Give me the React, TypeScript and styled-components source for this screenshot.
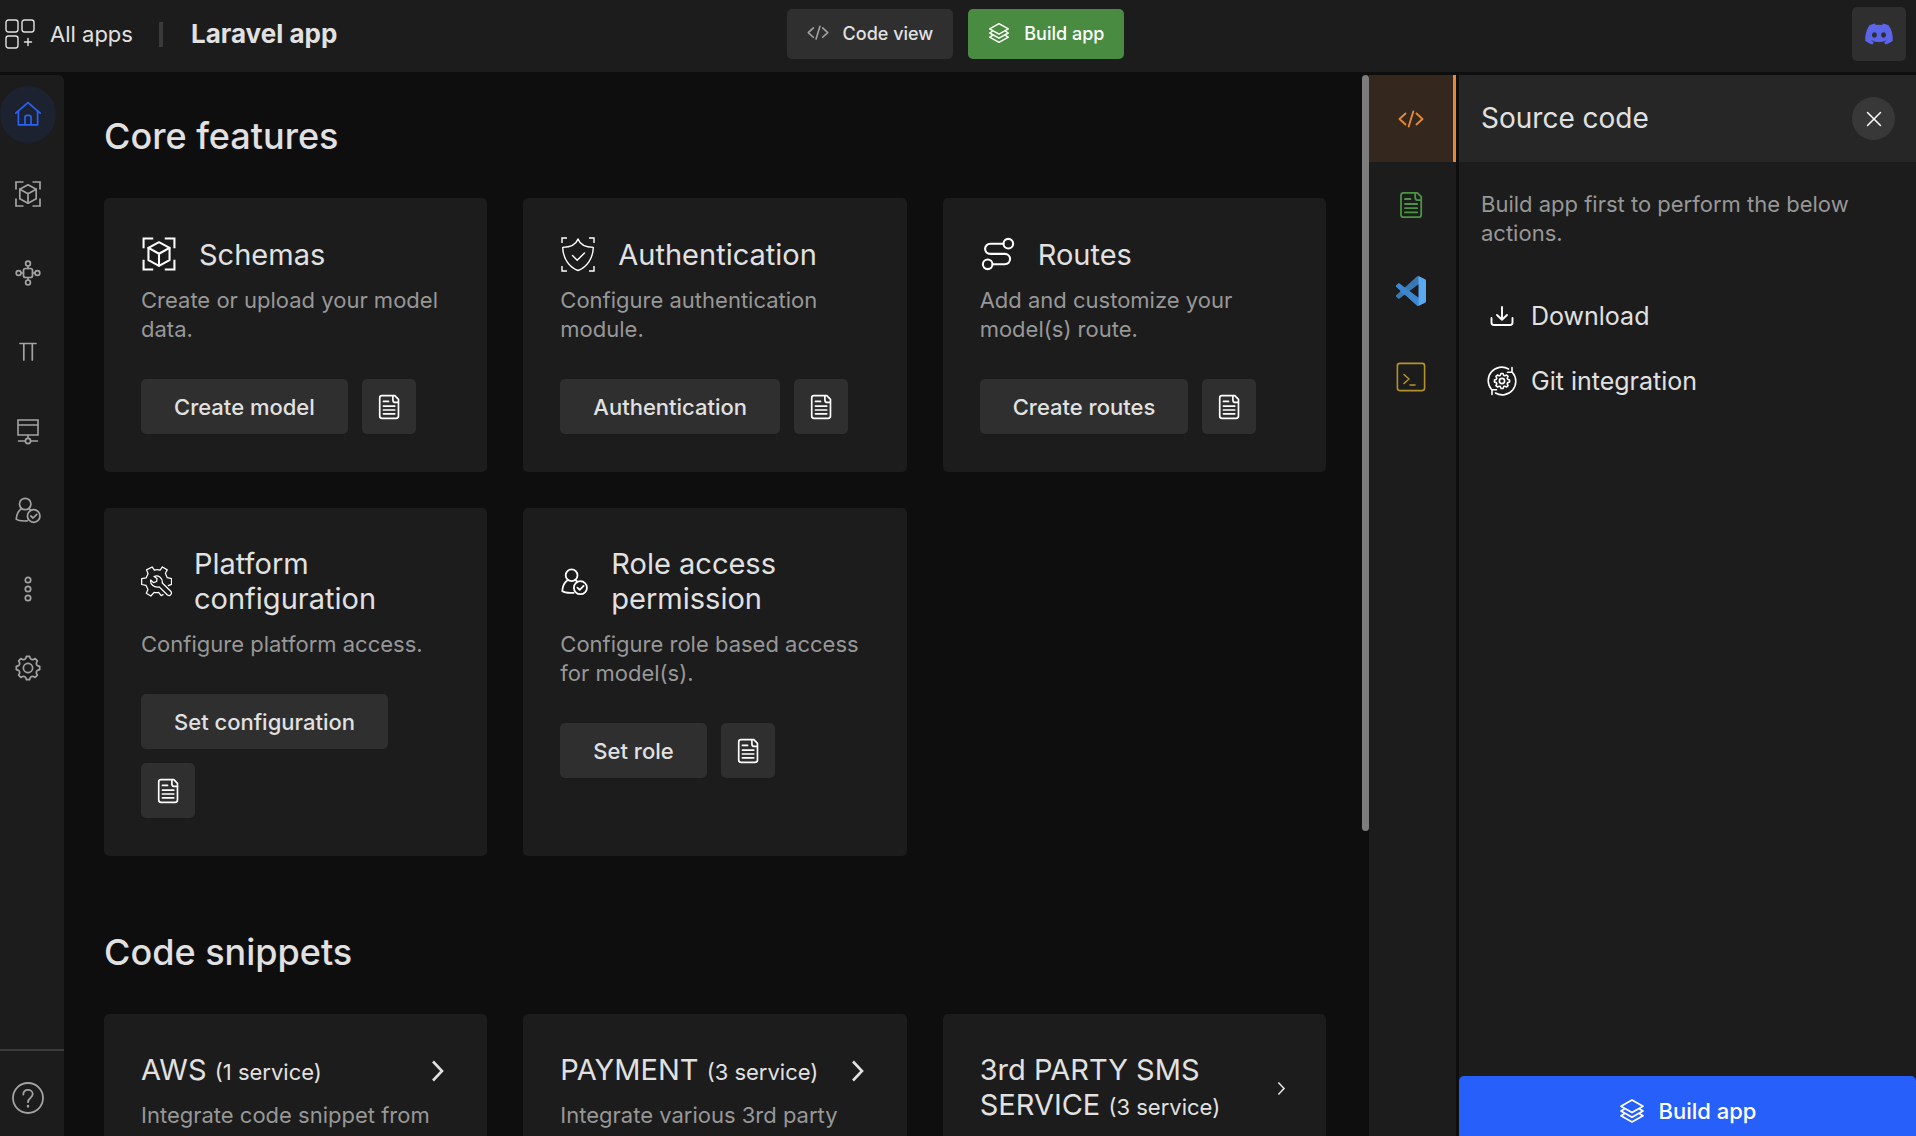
import React from "react";
import styled, { createGlobalStyle } from "styled-components";
import { FaDiscord } from "react-icons/fa";

const color = {
  page: "#0e0e0e",
  surface: "#1c1c1c",
  raised: "#262626",
  control: "#2f2f2f",
  line: "#3a3a3a",
  text: "#e1e1e1",
  muted: "#979797",
  icon: "#a3a3a3",
  white: "#ffffff",
  blue: "#275ffb",
  green: "#498c41",
  orange: "#e78838",
};

const GlobalStyle = createGlobalStyle`
  *, *::before, *::after { box-sizing: border-box; }
  html, body { margin: 0; background: ${color.page}; }
  body {
    overflow: hidden;
    color: ${color.text};
    font-family: Inter, "Liberation Sans", sans-serif;
    -webkit-font-smoothing: antialiased;
  }
  h1, h2, h3, p { margin: 0; font-weight: 400; }
  button { border: 0; padding: 0; margin: 0; font: inherit; color: inherit; background: none; cursor: pointer; }
  a { color: inherit; text-decoration: none; }
  svg { display: block; flex: none; }
`;

/* ---------- icons ---------- */

type IconProps = { size?: number };

const Svg = ({
  w,
  h = w,
  size = w,
  sw = 1.5,
  children,
}: {
  w: number;
  h?: number;
  size?: number;
  sw?: number;
  children: React.ReactNode;
}) => (
  <svg
    width={size}
    height={(size * h) / w}
    viewBox={`0 0 ${w} ${h}`}
    fill="none"
    stroke="currentColor"
    strokeWidth={sw}
    strokeLinecap="round"
    strokeLinejoin="round"
    aria-hidden="true"
  >
    {children}
  </svg>
);

const gearPath = (c: number, teeth: number, outer: number, inner: number) => {
  const step = (Math.PI * 2) / teeth;
  const pt = (r: number, a: number) =>
    `${(c + r * Math.sin(a)).toFixed(2)} ${(c - r * Math.cos(a)).toFixed(2)}`;
  let d = "";
  for (let i = 0; i < teeth; i++) {
    const a = i * step;
    d += `${i ? "L" : "M"}${pt(outer, a - step * 0.17)}`;
    d += `L${pt(outer, a + step * 0.17)}`;
    d += `L${pt(inner + 0.6, a + step * 0.27)}`;
    d += `Q${pt(inner - 1, a + step * 0.5)} ${pt(inner + 0.6, a + step * 0.73)}`;
  }
  return d + "Z";
};

const AppsIcon = () => (
  <Svg w={30} sw={1.4}>
    <rect x="1" y="1" width="12" height="12" rx="2.4" />
    <rect x="17" y="1" width="12" height="12" rx="2.4" />
    <rect x="1" y="17" width="12" height="12" rx="2.4" />
    <path d="M23 19.5v7M19.5 23h7" />
  </Svg>
);

const CodeIcon = ({ size = 22 }: IconProps) => (
  <Svg w={26} h={18} size={size} sw={1.9}>
    <path d="M7.5 3.5 1.5 9l6 5.5M18.5 3.5l6 5.5-6 5.5M15.3 1.5l-4.6 15" />
  </Svg>
);

const LayersIcon = ({ size = 22 }: IconProps) => (
  <Svg w={26} size={size} sw={1.7}>
    <path d="M13 2 24 8.2 13 14.4 2 8.2Z" />
    <path d="M5 11.2 2 13l11 6.2L24 13l-3-1.8" />
    <path d="M5 16 2 17.8 13 24l11-6.2-3-1.8" />
  </Svg>
);

const HomeIcon = () => (
  <Svg w={28} sw={1.7}>
    <path d="M1.8 12.2 14 1.6l12.2 10.6" />
    <path d="M4.4 10.400v13.400h19.200V10.400" />
    <path d="M11 23.600v-7.200q0-2 2-2h2q2 0 2 2v7.200" />
  </Svg>
);

const SchemaIcon = ({ size = 28, sw = 1.7 }: IconProps & { sw?: number }) => (
  <Svg w={28} size={size} sw={sw}>
    <path strokeLinecap="butt" strokeLinejoin="miter" d="M2 9.5V2h7.5M18.5 2H26v7.5M26 18.5V26h-7.5M9.500 26H2v-7.500" />
    <path d="m14 4.800 8.200 4.400v9.600L14 23.200l-8.200-4.400V9.200Z" />
    <path d="m5.800 9.200 8.200 4.600 8.200-4.600M14 13.800v9.400" />
  </Svg>
);

const HubIcon = () => (
  <Svg w={28} sw={1.7}>
    <rect x="9.500" y="9.500" width="9" height="9" rx="2" />
    <circle cx="14" cy="4.600" r="2.400" />
    <circle cx="14" cy="23.400" r="2.400" />
    <circle cx="4.600" cy="14" r="2.400" />
    <circle cx="23.400" cy="14" r="2.400" />
    <path d="M14 7v2.500M14 18.500V21M7 14h2.500M18.500 14H21" />
  </Svg>
);

const PiIcon = () => (
  <Svg w={28} sw={1.7}>
    <path d="M6 5.500h16M9.800 5.500v16.500M18.300 5.500v16.500" />
  </Svg>
);

const ServerIcon = () => (
  <Svg w={28} sw={1.6}>
    <path strokeLinejoin="miter" d="M4 3h20v15H4ZM4 8h20M14 18v3.200M4.500 24h6.900M16.600 24h6.900" />
    <circle cx="14" cy="24" r="2.600" />
  </Svg>
);

const UserCheckIcon = ({ size = 28 }: IconProps) => (
  <Svg w={28} size={size} sw={1.7}>
    <circle cx="11.200" cy="8" r="5.700" />
    <path d="M7.600 12.600C4.300 14.600 2.600 18 2.200 23.200c2 1.600 6.400 2 11 1.700M14.800 12.600l1.800 1.400" />
    <circle cx="19.700" cy="20" r="6.300" />
    <path d="m16.800 20 2.200 2 3.800-3.700" />
  </Svg>
);

const DotsIcon = () => (
  <Svg w={28} sw={1.7}>
    <circle cx="14" cy="5" r="2.700" />
    <circle cx="14" cy="14" r="2.700" />
    <circle cx="14" cy="23" r="2.700" />
  </Svg>
);

const GearIcon = () => (
  <Svg w={28} sw={1.7}>
    <path d={gearPath(14, 8, 11.8, 9.5)} />
    <circle cx="14" cy="14" r="4.600" />
  </Svg>
);

const HelpIcon = () => (
  <Svg w={34} sw={1.8}>
    <circle cx="17" cy="17" r="15" />
    <path d="M12.300 13.600c0-3 2-4.700 4.700-4.700s4.700 1.700 4.700 4.200c0 4-4.700 3.900-4.700 8.100" />
    <path d="M17 25v.4" strokeWidth="2.400" />
  </Svg>
);

const ShieldIcon = () => (
  <Svg w={36} sw={1.4}>
    <path strokeLinecap="butt" strokeLinejoin="miter" d="M2 7V2h5M29 2h5v5M34 30v5h-5M7 35H2v-5" />
    <path d="M18 3c2 5.500 8 8.200 15.300 8.400-.3 10.600-6 19.600-15.300 23.100C8.700 31 3 22 2.700 11.400 10 11.200 16 8.500 18 3Z" />
    <path d="m12.500 19.500 4.700 4.700 7.300-7.200" />
  </Svg>
);

const RouteIcon = () => (
  <Svg w={36} sw={2.1}>
    <circle cx="28.300" cy="7.700" r="4.800" />
    <circle cx="7.700" cy="28.300" r="4.800" />
    <path d="M23.400 7.700H10.200a5.100 5.100 0 0 0 0 10.200h14.700a5.100 5.100 0 0 1 0 10.300H12.700" />
  </Svg>
);

const WrenchGearIcon = () => (
  <svg
    width="31"
    height="31"
    viewBox="-0.5 -0.5 32 32"
    fill="none"
    stroke="currentColor"
    strokeWidth="1.3"
    strokeLinecap="round"
    strokeLinejoin="round"
    aria-hidden="true"
  >
    <path d="M27.700 19.700 31 18.500v-6l-4.500-1-1.800-4.500 1.900-3.500-5-3-2.300 3.200q-3-.9-6 0L11 .5 5.200 3.500l1.600 4-2.100 4.300-4.500.8v6l4.500 1 2 4.200-1.700 3.900 4.700 2.800 3.300-3.700q2.400.6 4.700 0l2.600 3.300 2-1" />
    <path d="M13 10.300c4-2.200 9 1.500 8.500 6.700l8.700 8.500c2 2.500-.7 5.700-3.400 4L18.300 21c-5 1.300-9.800-2.600-8.800-7l2.800 2.700 3.400-1.200.3-3Z" />
  </svg>
);

const DocIcon = ({ size = 26 }: IconProps) => (
  <Svg w={28} size={size} sw={1.8}>
    <path d="M6.500 1.800h13.800l3.900 3.900v18c0 1.700-.8 2.500-2.500 2.500H6.500C4.800 26.200 4 25.400 4 23.700V4.300c0-1.700.8-2.500 2.500-2.500Z" />
    <path d="M18.200 2v4.400c0 2 .8 2.700 2.600 2.700h3.200M8 8h5.500M8 13h12.200M8 17.200h12.200M8 21.400h12.200" />
  </Svg>
);

const VsCodeIcon = () => (
  <svg width="30" height="30" viewBox="0 0 24 24" aria-hidden="true">
    <defs>
      <clipPath id="vscode-shape">
        <path
          clipRule="evenodd"
          d="M23.15 2.587L18.21.21a1.494 1.494 0 0 0-1.705.29l-9.46 8.63-4.12-3.128a.999.999 0 0 0-1.276.057L.327 7.261A1 1 0 0 0 .326 8.74L3.899 12 .326 15.26a1 1 0 0 0 .001 1.479L1.65 17.94a.999.999 0 0 0 1.276.057l4.12-3.128 9.46 8.63a1.492 1.492 0 0 0 1.704.29l4.942-2.377A1.5 1.5 0 0 0 24 20.06V3.939a1.5 1.5 0 0 0-.85-1.352zm-5.146 14.861L10.826 12l7.178-5.448v10.896z"
        />
      </clipPath>
    </defs>
    <g clipPath="url(#vscode-shape)">
      <path fill="#3a78b4" d="M0 0h24v24H0z" />
      <path fill="#3d86d0" d="M-1 8.500 2.300 5.500 18 17.400V24h-1.500Z" />
      <path fill="#5aa9ef" d="M18 0h6v24h-6z" />
    </g>
  </svg>
);

const TerminalIcon = () => (
  <Svg w={30} sw={1.6}>
    <rect x="1.400" y="1.400" width="27.200" height="27.200" rx="2.500" />
    <path d="m8 12.500 5 4.500-5 4.500M14 23h5" />
  </Svg>
);

const CloseIcon = () => (
  <Svg w={16} sw={1.5}>
    <path d="m1.500 1.500 13 13M14.500 1.500l-13 13" />
  </Svg>
);

const DownloadIcon = () => (
  <Svg w={30} sw={1.9}>
    <path d="M15 6v12.500M10 14l5 4.800 5-4.800" />
    <path d="M4.500 17v4.500c0 1.700.8 2.500 2.500 2.500h16c1.700 0 2.500-.8 2.500-2.500V17" />
  </Svg>
);

const GitSyncIcon = () => (
  <Svg w={30} sw={1.6}>
    <path d="M4.500 23.500A13.500 13.500 0 0 1 21.500 3M25.500 6.500A13.500 13.500 0 0 1 8.500 27" />
    <path d="M25 1.500v4.700h-4.500M5 28.500v-4.700h4.500" />
    <path d={gearPath(15, 8, 7.6, 6)} />
    <circle cx="15" cy="15" r="2.600" />
  </Svg>
);

const ChevronIcon = ({ size }: { size: number }) => (
  <Svg w={24} size={size} sw={2.6}>
    <path strokeLinecap="butt" strokeLinejoin="miter" d="m7 2.500 9 9.500-9 9.500" />
  </Svg>
);

/* ---------- shell ---------- */

const Shell = styled.div`
  display: flex;
  flex-direction: column;
  gap: 3px;
  height: calc(100vh + 10px);
`;

const TopBar = styled.header`
  display: grid;
  grid-template-columns: 1fr auto 1fr;
  align-items: center;
  flex: none;
  height: 72px;
  padding: 0 10px 4px 5px;
  background: ${color.surface};
`;

const Crumbs = styled.div`
  display: flex;
  align-items: center;
  line-height: 30px;
`;

const AllApps = styled.a`
  display: flex;
  align-items: center;
  gap: 15px;
  font-size: 22px;
`;

const Divider = styled.span`
  width: 4px;
  height: 25px;
  margin: 0 28px 0 26px;
  background: ${color.line};
`;

const AppName = styled.h1`
  font-size: 26px;
  font-weight: 700;
`;

const TopActions = styled.div`
  display: flex;
  gap: 15px;
`;

const TopButton = styled.button<{ $primary?: boolean }>`
  display: flex;
  align-items: center;
  gap: 14px;
  height: 50px;
  padding: 0 20px 2px;
  border-radius: 5px;
  font-size: 18px;
  font-weight: 500;
  color: ${(p) => (p.$primary ? color.white : color.text)};
  background: ${(p) => (p.$primary ? color.green : color.control)};
  svg { color: ${(p) => (p.$primary ? color.white : color.icon)}; }
`;

const DiscordLink = styled.a`
  display: flex;
  align-items: center;
  justify-content: center;
  justify-self: end;
  width: 54px;
  height: 54px;
  border-radius: 5px;
  color: #5b65ea;
  background: ${color.control};
`;

const Workspace = styled.div`
  display: flex;
  flex: 1;
  min-height: 0;
`;

const Sidebar = styled.nav`
  display: flex;
  flex-direction: column;
  justify-content: space-between;
  flex: none;
  width: 64px;
  border-top-right-radius: 6px;
  background: ${color.surface};
`;

const SideList = styled.div`
  display: flex;
  flex-direction: column;
  gap: 22px;
  padding: 11px 8px 0 0;
`;

const SideButton = styled.button<{ $active?: boolean }>`
  display: flex;
  align-items: center;
  justify-content: center;
  height: 57px;
  border-radius: 50%;
  color: ${(p) => (p.$active ? "#2862f6" : color.icon)};
  background: ${(p) => (p.$active ? "#1d2231" : "transparent")};
`;

const HelpArea = styled.div`
  display: flex;
  height: 97px;
  padding: 0 8px 2px 0;
  border-top: 2px solid ${color.line};
  color: ${color.icon};
  button { display: flex; flex: 1; align-items: center; justify-content: center; }
`;

/* ---------- main column ---------- */

const Main = styled.main`
  flex: 1;
  min-width: 0;
  overflow: hidden;
  padding: 39px 36px 0 40px;
`;

const Section = styled.section`
  margin-bottom: 74px;
`;

const SectionTitle = styled.h2`
  margin-bottom: 40px;
  font-size: 36px;
  font-weight: 500;
  line-height: 44px;
`;

const CardGrid = styled.div`
  display: grid;
  grid-template-columns: repeat(3, minmax(0, 1fr));
  gap: 36px;
`;

const Card = styled.article`
  min-height: 160px;
  padding: 38px 37px;
  border-radius: 5px;
  background: ${color.surface};
`;

const CardHead = styled.div`
  display: flex;
  align-items: center;
  gap: 22px;
  margin-bottom: 14px;
  svg { color: ${color.white}; }
`;

const CardTitle = styled.h3`
  font-size: 29px;
  line-height: 35px;
  small { font-size: 22px; }
`;

const Muted = styled.p`
  font-size: 22px;
  line-height: 29px;
  color: ${color.muted};
`;

const CardActions = styled.div`
  display: flex;
  flex-wrap: wrap;
  gap: 14px;
  margin-top: 35px;
`;

const CardButton = styled.button`
  height: 55px;
  padding: 0 33px;
  border-radius: 5px;
  font-size: 22px;
  font-weight: 500;
  background: ${color.control};
`;

const DocButton = styled.button`
  display: flex;
  align-items: center;
  justify-content: center;
  width: 54px;
  height: 55px;
  border-radius: 5px;
  color: ${color.white};
  background: ${color.control};
`;

const SnippetHead = styled.a`
  display: flex;
  align-items: center;
  justify-content: space-between;
  margin-bottom: 11px;
`;

const ScrollTrack = styled.div`
  flex: none;
  width: 7px;
`;

const ScrollThumb = styled.div`
  height: calc(100% * 12 / 17);
  border-radius: 4px;
  background: #7d7d7d;
`;

/* ---------- right side ---------- */

const Rail = styled.div`
  flex: none;
  width: 87px;
  background: ${color.surface};
`;

const RailTab = styled.button<{ $tint: string; $active?: boolean }>`
  display: flex;
  align-items: center;
  justify-content: center;
  width: 100%;
  height: ${(p) => (p.$active ? 87 : 86)}px;
  border-right: 3px solid ${(p) => (p.$active ? p.$tint : "transparent")};
  color: ${(p) => p.$tint};
  background: ${(p) => (p.$active ? "#33271e" : "transparent")};
`;

const Panel = styled.aside`
  display: flex;
  flex-direction: column;
  flex: none;
  width: 457px;
  margin-left: 3px;
  background: ${color.surface};
`;

const PanelHead = styled.div`
  display: flex;
  align-items: center;
  justify-content: space-between;
  height: 87px;
  padding: 0 21px 0 22px;
  background: ${color.raised};
`;

const PanelTitle = styled.h2`
  font-size: 28px;
  line-height: 35px;
`;

const CloseButton = styled.button`
  display: flex;
  align-items: center;
  justify-content: center;
  width: 43px;
  height: 43px;
  border-radius: 50%;
  color: ${color.white};
  background: #383838;
`;

const PanelBody = styled.div`
  flex: 1;
  padding: 28px 22px;
`;

const ActionList = styled.div`
  display: flex;
  flex-direction: column;
  gap: 35px;
  margin-top: 53px;
  padding-left: 6px;
`;

const ActionButton = styled.button`
  display: flex;
  align-items: center;
  gap: 14px;
  font-size: 25px;
  line-height: 30px;
  svg { color: ${color.white}; }
`;

const BuildButton = styled.button`
  display: flex;
  align-items: center;
  justify-content: center;
  gap: 14px;
  height: 70px;
  border-radius: 5px;
  font-size: 22px;
  font-weight: 500;
  color: ${color.white};
  background: ${color.blue};
`;

const sideItems = [
  { label: "Home", icon: <HomeIcon /> },
  { label: "Schemas", icon: <SchemaIcon /> },
  { label: "Routes", icon: <HubIcon /> },
  { label: "Constants", icon: <PiIcon /> },
  { label: "Environment", icon: <ServerIcon /> },
  { label: "Role access", icon: <UserCheckIcon /> },
  { label: "More", icon: <DotsIcon /> },
  { label: "Settings", icon: <GearIcon /> },
];

const features = [
  { title: "Schemas", text: "Create or upload your model data.", action: "Create model", icon: <SchemaIcon size={36} sw={1.6} /> },
  { title: "Authentication", text: "Configure authentication module.", action: "Authentication", icon: <ShieldIcon /> },
  { title: "Routes", text: "Add and customize your model(s) route.", action: "Create routes", icon: <RouteIcon /> },
  { title: "Platform configuration", text: "Configure platform access.", action: "Set configuration", icon: <WrenchGearIcon /> },
  { title: "Role access permission", text: "Configure role based access for model(s).", action: "Set role", icon: <UserCheckIcon size={29} /> },
];

const snippets = [
  { title: "AWS", count: "(1 service)", text: "Integrate code snippet from", chevron: 24 },
  { title: "PAYMENT", count: "(3 service)", text: "Integrate various 3rd party", chevron: 24 },
  { title: "3rd PARTY SMS SERVICE", count: "(3 service)", text: "", chevron: 15 },
];

const railTabs = [
  { label: "Source code", tint: color.orange, icon: <CodeIcon size={26} /> },
  { label: "Documents", tint: "#4a9442", icon: <DocIcon size={28} /> },
  { label: "VS Code", tint: "#3d86d0", icon: <VsCodeIcon /> },
  { label: "Terminal", tint: "#b3922c", icon: <TerminalIcon /> },
];

export default function App() {
  return (
    <>
      <GlobalStyle />
      <Shell>
        <TopBar>
          <Crumbs>
            <AllApps href="#apps">
              <AppsIcon />
              All apps
            </AllApps>
            <Divider />
            <AppName>Laravel app</AppName>
          </Crumbs>
          <TopActions>
            <TopButton>
              <CodeIcon />
              Code view
            </TopButton>
            <TopButton $primary>
              <LayersIcon />
              Build app
            </TopButton>
          </TopActions>
          <DiscordLink href="#discord" aria-label="Discord">
            <FaDiscord size={30} />
          </DiscordLink>
        </TopBar>

        <Workspace>
          <Sidebar aria-label="Sections">
            <SideList>
              {sideItems.map((item, i) => (
                <SideButton key={item.label} $active={i === 0} aria-label={item.label}>
                  {item.icon}
                </SideButton>
              ))}
            </SideList>
            <HelpArea>
              <button aria-label="Help">
                <HelpIcon />
              </button>
            </HelpArea>
          </Sidebar>

          <Main>
            <Section>
              <SectionTitle>Core features</SectionTitle>
              <CardGrid>
                {features.map((f) => (
                  <Card key={f.title}>
                    <CardHead>
                      {f.icon}
                      <CardTitle>{f.title}</CardTitle>
                    </CardHead>
                    <Muted>{f.text}</Muted>
                    <CardActions>
                      <CardButton>{f.action}</CardButton>
                      <DocButton aria-label={`${f.title} documentation`}>
                        <DocIcon />
                      </DocButton>
                    </CardActions>
                  </Card>
                ))}
              </CardGrid>
            </Section>
            <Section>
              <SectionTitle>Code snippets</SectionTitle>
              <CardGrid>
                {snippets.map((s) => (
                  <Card key={s.title}>
                    <SnippetHead href="#snippets">
                      <CardTitle>
                        {s.title} <small>{s.count}</small>
                      </CardTitle>
                      <ChevronIcon size={s.chevron} />
                    </SnippetHead>
                    {s.text && <Muted>{s.text}</Muted>}
                  </Card>
                ))}
              </CardGrid>
            </Section>
          </Main>
          <ScrollTrack>
            <ScrollThumb />
          </ScrollTrack>

          <Rail>
            {railTabs.map((t, i) => (
              <RailTab key={t.label} $tint={t.tint} $active={i === 0} aria-label={t.label}>
                {t.icon}
              </RailTab>
            ))}
          </Rail>
          <Panel>
            <PanelHead>
              <PanelTitle>Source code</PanelTitle>
              <CloseButton aria-label="Close">
                <CloseIcon />
              </CloseButton>
            </PanelHead>
            <PanelBody>
              <Muted>Build app first to perform the below actions.</Muted>
              <ActionList>
                <ActionButton>
                  <DownloadIcon />
                  Download
                </ActionButton>
                <ActionButton>
                  <GitSyncIcon />
                  Git integration
                </ActionButton>
              </ActionList>
            </PanelBody>
            <BuildButton>
              <LayersIcon size={26} />
              Build app
            </BuildButton>
          </Panel>
        </Workspace>
      </Shell>
    </>
  );
}
